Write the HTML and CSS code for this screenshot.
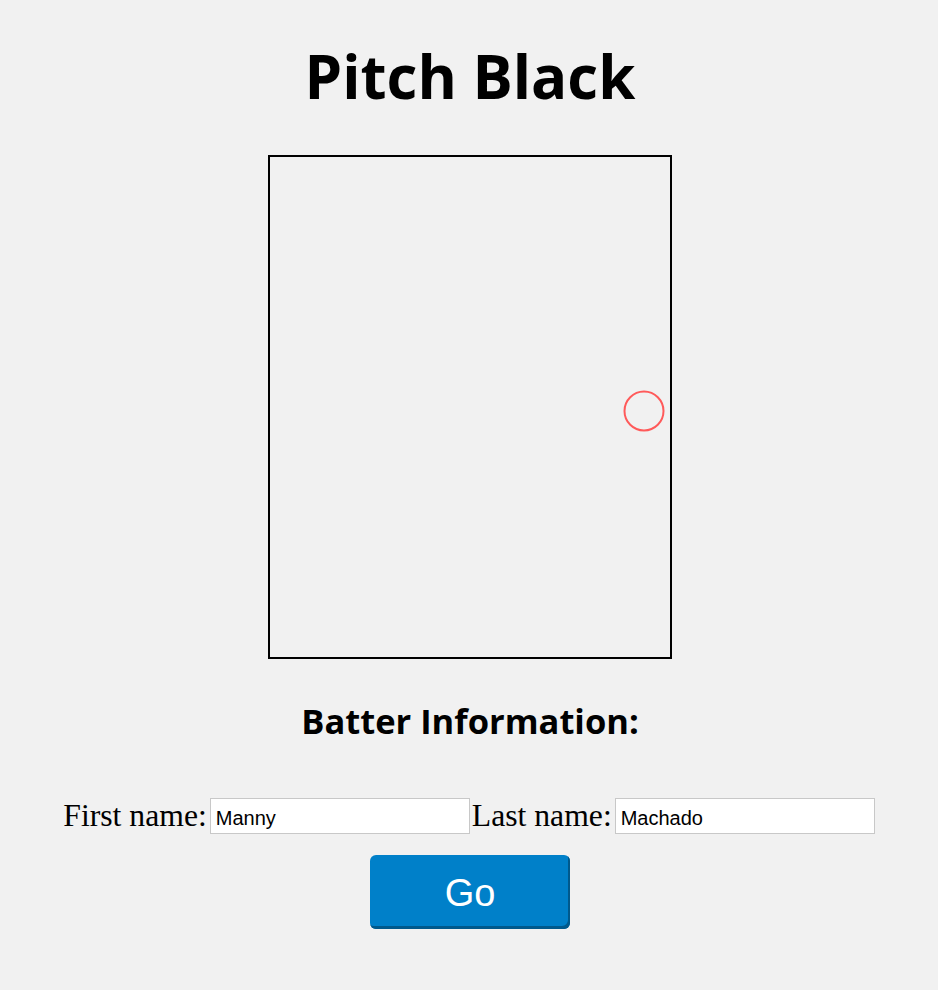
FILE: index.html
```html
<!DOCTYPE html>
<html>
<head>
<meta charset="utf-8">
<title>Pitch Black</title>
<link rel="stylesheet" href="styles.css">
</head>
<body>
<main class="page">
  <h1 class="title">Pitch Black</h1>
  <div class="zone">
    <svg class="zone-svg" width="400" height="500" viewBox="0 0 400 500">
      <circle cx="374" cy="254" r="19.5" fill="none" stroke="#ff5a5a" stroke-width="2"/>
    </svg>
  </div>
  <h2 class="subtitle">Batter Information:</h2>
  <form class="batter">
    <div class="row">
      <label class="lbl">First name:</label><input class="field" type="text" value="Manny"><label class="lbl">Last name:</label><input class="field" type="text" value="Machado">
    </div>
    <button class="go" type="button">Go</button>
  </form>
</main>
</body>
</html>
```
FILE: styles.css
```css
html, body {
  margin: 0;
  padding: 0;
  background: #f1f1f1;
}
.page {
  display: flex;
  flex-direction: column;
  align-items: center;
  padding-top: 36px;
  padding-left: 2px;
}
.title {
  margin: 0;
  font-family: "Open Sans", "DejaVu Sans", sans-serif;
  font-weight: 700;
  font-size: 60px;
  line-height: 80px;
  color: #000;
}
.zone {
  margin-top: 39px;
  width: 400px;
  height: 500px;
  border: 2px solid #000;
}
.zone-svg {
  display: block;
}
.subtitle {
  margin: 38px 0 0;
  font-family: "Open Sans", "DejaVu Sans", sans-serif;
  font-weight: 700;
  font-size: 34.5px;
  line-height: 48px;
  color: #000;
}
.batter {
  margin-top: 53px;
  display: flex;
  flex-direction: column;
  align-items: center;
}
.row {
  display: flex;
  align-items: center;
}
.lbl {
  font-family: "Liberation Serif", serif;
  font-size: 31.7px;
  line-height: 36px;
  color: #000;
}
.field {
  box-sizing: border-box;
  width: 260px;
  height: 36px;
  margin: 0 2px 0 3px;
  padding: 4px 5px 0;
  border: 1px solid #c8c8c8;
  background: #fff;
  font-family: "Liberation Sans", sans-serif;
  font-size: 20px;
  color: #000;
  outline: none;
}
.go {
  margin-top: 21px;
  width: 200px;
  height: 74px;
  border: none;
  border-radius: 6px;
  background: #0080c9;
  box-shadow: inset -2px -3px 0 #00598c;
  color: #fff;
  font-family: "Liberation Sans", sans-serif;
  font-size: 38px;
  padding: 3px 0 0;
}
```
